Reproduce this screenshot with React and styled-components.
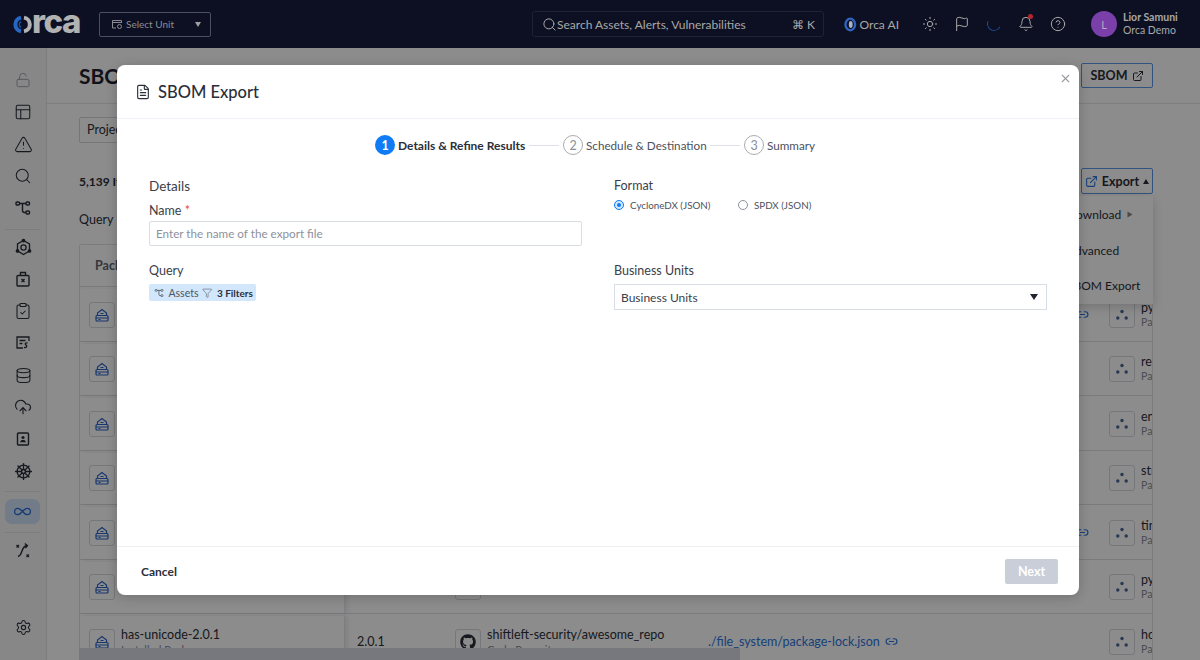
import React from 'react'
import styled, { createGlobalStyle } from 'styled-components'
import {
  LockOpen, PanelsTopLeft, TriangleAlert, Search, ClipboardCheck, Database, CloudUpload,
  ShipWheel, Infinity as InfinityIcon, Settings, Sun, Flag, Bell, CircleHelp, ExternalLink,
  FileText, X, Link2, Funnel,
} from 'lucide-react'
import { FaGithub } from 'react-icons/fa'

const GlobalStyle = createGlobalStyle`
  html, body { margin: 0; padding: 0; background: #fff; }
  body { font-family: "Lato", "Noto Sans", sans-serif; color: #2b2f3a; }
  * { box-sizing: border-box; }
`

const Page = styled.div`
  position: relative;
  width: 1200px;
  height: 660px;
  overflow: hidden;
  display: flex;
  flex-direction: column;
`

/* top bar */
const TopBar = styled.header`
  height: 48px;
  flex: none;
  display: flex;
  align-items: center;
  background: #0d1023;
  color: #a8a8a8;
  font-size: 12px;
`
const Logo = styled.div`
  margin-left: 13px;
  width: 67px;
  display: flex;
  align-items: center;
`
const LogoText = styled.span`
  font-family: "Inter", sans-serif;
  font-weight: 800;
  font-size: 33px;
  line-height: 24px;
  height: 24px;
  letter-spacing: -1.5px;
  color: #b2b2b2;
  margin-top: -6px;
`
const UnitSelect = styled.div`
  margin-left: 19px;
  width: 112px;
  height: 25px;
  border: 1px solid #4b4f63;
  border-radius: 2px;
  display: flex;
  align-items: center;
  gap: 3px;
  padding: 0 9px 0 11px;
  font-size: 10px;
  color: #8b8c93;
  & > span { flex: 1; }
`
const Caret = styled.i`
  width: 0;
  height: 0;
  border-left: 3.5px solid transparent;
  border-right: 3.5px solid transparent;
  border-${({ $up }) => ($up ? 'bottom' : 'top')}: 5px solid ${({ $color }) => $color || '#a0a0a0'};
`
const SearchBox = styled.div`
  margin-left: 321px;
  width: 292px;
  height: 26px;
  border: 1px solid #1e2238;
  border-radius: 3px;
  display: flex;
  align-items: center;
  gap: 0;
  padding: 0 8px 0 9px;
  & > span { flex: 1; }
`
const OrcaAi = styled.div`
  margin-left: 20px;
  width: 55px;
  display: flex;
  align-items: center;
  gap: 3px;
  white-space: nowrap;
`
const IconGroup = styled.div`
  margin-left: 23px;
  display: flex;
  gap: 16px;
  align-items: center;
`
const BellWrap = styled.div`
  position: relative;
  height: 16px;
`
const BellDot = styled.i`
  position: absolute;
  top: -2px;
  right: 1px;
  width: 5px;
  height: 5px;
  border-radius: 50%;
  background: #b3262f;
`
const Spinner = styled.i`
  width: 14px;
  height: 14px;
  margin: 0 1px;
  border-radius: 50%;
  border: 1.5px solid transparent;
  border-bottom-color: #1d4c8c;
  border-left-color: #1d4c8c;
  transform: rotate(-20deg);
`
const Avatar = styled.div`
  margin-left: 25px;
  width: 26px;
  height: 26px;
  border-radius: 50%;
  background: #7a3fa8;
  color: #b9a6c6;
  font-size: 11px;
  display: flex;
  align-items: center;
  justify-content: center;
`
const UserInfo = styled.div`
  margin-left: 6px;
  font-size: 10.5px;
  line-height: 13px;
  white-space: nowrap;
  & > b { display: block; font-weight: 700; }
`

/* page under the dialog */
const Body = styled.div`
  flex: 1;
  min-height: 0;
  display: flex;
`
const Sidebar = styled.nav`
  width: 47px;
  flex: none;
  padding: 16px 0 17px;
  display: flex;
  flex-direction: column;
  background: #f6f6f7;
  border-right: 1px solid #e2e3e6;
  box-shadow: 2px 0 4px rgba(0, 0, 0, 0.06);
  color: #2b2f3a;
`
const NavItem = styled.div`
  height: 32px;
  flex: none;
  display: flex;
  align-items: center;
  justify-content: center;
  margin-top: ${({ $last }) => ($last ? 'auto' : '0')};
  color: ${({ $muted }) => ($muted ? '#9a9da6' : 'inherit')};
`
const ActiveItem = styled.div`
  width: 35px;
  height: 25px;
  margin-left: -1px;
  border-radius: 7px;
  background: #cfe0f7;
  color: #2a6fd6;
  display: flex;
  align-items: center;
  justify-content: center;
`
const NavDivider = styled.hr`
  flex: none;
  width: 35px;
  height: 1px;
  border: 0;
  background: #e1e3e8;
  margin: ${({ $m }) => $m};
  margin-left: 5px;
`
const Main = styled.main`
  flex: 1;
  min-width: 0;
  display: flex;
  flex-direction: column;
  overflow: hidden;
  background: #fff;
`
const PageHeader = styled.div`
  height: 56px;
  flex: none;
  padding: 0 47px 0 32px;
  display: flex;
  align-items: center;
  justify-content: space-between;
  border-bottom: 1px solid #e4e6ea;
`
const PageTitle = styled.h1`
  margin: 0;
  font-size: 21px;
  font-weight: 700;
  color: #1f2330;
`
const OutlineButton = styled.button`
  font-family: inherit;
  height: ${({ $h }) => $h}px;
  width: 72px;
  padding: 0;
  display: flex;
  align-items: center;
  justify-content: center;
  gap: 4px;
  background: #fff;
  border: 1px solid #5b96e8;
  border-radius: 2px;
  font-size: 12.5px;
  font-weight: 700;
  color: #2b2f3a;
`
const Content = styled.div`
  padding: 13px 47px 0 32px;
  display: flex;
  flex-direction: column;
`
const FilterBox = styled.div`
  width: 110px;
  height: 26px;
  border: 1px solid #d5d8df;
  border-radius: 2px;
  padding: 0 7px;
  font-size: 12.5px;
  line-height: 24px;
`
const CountRow = styled.div`
  position: relative;
  margin-top: 25px;
  height: 26px;
  display: flex;
  align-items: center;
  justify-content: space-between;
  font-size: 12px;
  font-weight: 700;
`
const Menu = styled.div`
  position: absolute;
  z-index: 2;
  top: 28px;
  right: 0;
  width: 98px;
  height: 108px;
  padding: 1px 0 0 12px;
  display: flex;
  flex-direction: column;
  background: #fff;
  box-shadow: 0 3px 10px rgba(0, 0, 0, 0.18);
`
const MenuItem = styled.div`
  height: 35.5px;
  display: flex;
  align-items: center;
  gap: 6px;
  font-size: 12px;
  font-weight: 400;
`
const QueryLabel = styled.div`
  margin-top: 18px;
  font-size: 12.5px;
  line-height: 16px;
`
const Table = styled.div`
  margin-top: 16px;
  border: 1px solid #dfe1e6;
  border-bottom: 0;
  border-radius: 2px 2px 0 0;
`
const HeadRow = styled.div`
  height: 42px;
  padding-left: 15px;
  display: flex;
  align-items: center;
  font-size: 12.5px;
  font-weight: 700;
  color: #5f6470;
  border-bottom: 1px solid #dfe1e6;
`
const Row = styled.div`
  height: 54.5px;
  padding-top: 2px;
  display: grid;
  grid-template-columns: 265px 101px 254px 399px 53px;
  border-bottom: 1px solid #dfe1e6;
`
const Cell = styled.div`
  display: flex;
  align-items: center;
  gap: 6px;
  min-width: 0;
  overflow: hidden;
  padding: ${({ $pad }) => $pad || '0 9px'};
  justify-content: ${({ $end }) => ($end ? 'flex-end' : 'flex-start')};
  font-size: 12.5px;
  color: #2b2f3a;
  ${({ $sticky }) => $sticky && 'box-shadow: 3px 0 4px rgba(0, 0, 0, 0.08); border-right: 1px solid #e5e6ea;'}
`
const IconBox = styled.div`
  width: 26px;
  height: 26px;
  flex: none;
  border: 1px solid #d6d9e1;
  border-radius: 3px;
  display: flex;
  align-items: center;
  justify-content: center;
  color: ${({ $color }) => $color};
`
const CellText = styled.div`
  display: flex;
  flex-direction: column;
  white-space: nowrap;
  line-height: 15px;
`
const SubText = styled.span`
  font-size: ${({ $small }) => ($small ? 10.5 : 11)}px;
  color: #8a8e99;
`
const FileLink = styled.span`
  display: flex;
  align-items: center;
  gap: 5px;
  color: #2a75e0;
  white-space: nowrap;
`
const ScrollThumb = styled.div`
  position: absolute;
  left: 79px;
  bottom: 0;
  width: 661px;
  height: 12px;
  background: #d9dbe6;
  z-index: 1;
`

/* dialog */
const Overlay = styled.div`
  position: absolute;
  z-index: 3;
  inset: 48px 0 0 0;
  padding: 17px 121px 65px 117px;
  background: rgba(0, 0, 0, 0.45);
  display: flex;
`
const Modal = styled.section`
  position: relative;
  flex: 1;
  display: flex;
  flex-direction: column;
  background: #fff;
  border-radius: 8px;
  box-shadow: 0 2px 12px rgba(0, 0, 0, 0.2);
`
const ModalHeader = styled.div`
  height: 54px;
  flex: none;
  padding-left: 18px;
  display: flex;
  align-items: center;
  gap: 7px;
  border-bottom: 1.5px solid #f0f1f6;
  color: #2b2f3a;
`
const ModalTitle = styled.h2`
  margin: 0;
  font-size: 16.5px;
  font-weight: 500;
`
const CloseButton = styled.div`
  position: absolute;
  top: 7px;
  right: 7px;
  color: #9a9ca3;
  display: flex;
`
const Stepper = styled.div`
  margin-top: 16px;
  height: 20px;
  padding-left: 258px;
  display: flex;
  align-items: center;
`
const StepNumber = styled.span`
  width: 20px;
  height: 20px;
  flex: none;
  border-radius: 50%;
  display: flex;
  align-items: center;
  justify-content: center;
  font-size: 12.5px;
  font-weight: ${({ $active }) => ($active ? 700 : 400)};
  color: ${({ $active }) => ($active ? '#fff' : '#8a8e99')};
  background: ${({ $active }) => ($active ? '#0f7cf5' : '#fff')};
  border: ${({ $active }) => ($active ? '0' : '1px solid #a9acb4')};
`
const StepLabel = styled.span`
  margin-left: 3px;
  width: ${({ $w }) => $w}px;
  font-size: ${({ $active }) => ($active ? 12 : 11.7)}px;
  white-space: nowrap;
  font-weight: ${({ $active }) => ($active ? 700 : 400)};
  color: ${({ $active }) => ($active ? '#2b2f3a' : '#4d515c')};
`
const StepLine = styled.i`
  width: 30px;
  height: 1px;
  margin: 0 4px 0 4px;
  background: #dfe1ea;
`
const FormGrid = styled.div`
  flex: 1;
  padding: 22px 32px 0;
  display: grid;
  grid-template-columns: 433px 433px;
  column-gap: 32px;
  align-content: start;
`
const FormColumn = styled.div`
  display: flex;
  flex-direction: column;
  padding-top: ${({ $top }) => $top || 0}px;
`
const SectionTitle = styled.div`
  font-size: 13.5px;
  line-height: 18px;
  color: #3a3e49;
`
const Label = styled.label`
  display: block;
  margin-top: ${({ $top }) => $top}px;
  font-size: 12.5px;
  line-height: 14px;
  color: #3a3e49;
  & > em { color: #e5484d; font-style: normal; }
`
const TextInput = styled.div`
  margin-top: 3px;
  height: 25px;
  border: 1px solid #d9dde6;
  border-radius: 2px;
  padding: 0 6px;
  font-size: 11.7px;
  line-height: 23px;
  color: #8d919c;
`
const QueryChip = styled.div`
  margin-top: 6px;
  width: 107px;
  height: 17px;
  padding: 0 3px 0 5px;
  display: flex;
  align-items: center;
  gap: 4px;
  background: #d3e7fc;
  border-radius: 2px;
  font-size: 10.5px;
  color: #4d5560;
  white-space: nowrap;
  & > b { color: #2b2f3a; font-weight: 700; font-size: 10px; }
`
const RadioRow = styled.div`
  margin-top: 5px;
  height: 14px;
  display: flex;
  align-items: center;
`
const Radio = styled.i`
  width: 10px;
  height: 10px;
  flex: none;
  border-radius: 50%;
  border: ${({ $on }) => ($on ? '3px solid #d3e7fc' : '1px solid #8d919c')};
  background: ${({ $on }) => ($on ? '#0f7cf5' : '#fff')};
  outline: ${({ $on }) => ($on ? '1px solid #0f7cf5' : 'none')};
  outline-offset: -1px;
`
const RadioLabel = styled.span`
  margin-left: ${({ $gap }) => $gap}px;
  width: ${({ $w }) => $w}px;
  font-size: 9.8px;
  color: #4d515c;
  white-space: nowrap;
`
const SelectBox = styled.div`
  margin-top: 6px;
  height: 26px;
  border: 1px solid #d9dde6;
  padding: 0 8px 0 6px;
  display: flex;
  align-items: center;
  justify-content: space-between;
  font-size: 12px;
  color: #3a3e49;
`
const ModalFooter = styled.div`
  height: 49px;
  flex: none;
  padding: 0 21px 0 24px;
  display: flex;
  align-items: center;
  justify-content: space-between;
  border-top: 1.5px solid #eff0f3;
`
const CancelButton = styled.button`
  border: 0;
  padding: 0;
  background: none;
  font-family: inherit;
  font-size: 12px;
  font-weight: 700;
  color: #2b2f3a;
`
const NextButton = styled.button`
  width: 53px;
  height: 25px;
  border: 0;
  border-radius: 2px;
  background: #c9ced9;
  color: #fff;
  font-family: inherit;
  font-size: 12.5px;
  font-weight: 700;
`

/* drawn icons */
const OrcaRing = () => (
  <svg width="19" height="19" viewBox="0 0 19 19" fill="none" strokeWidth="4">
    <path d="M8 2.6A7 7 0 0 0 2.4 9.5 7 7 0 0 0 8 16.4" stroke="#2468c4" />
    <path d="M11 2.6a7 7 0 0 1 0 13.8" stroke="#b2b2b2" />
    <path d="M8 6.5a3.5 3.5 0 0 0 0 6" stroke="#1c4f96" strokeWidth="1.5" />
  </svg>
)
const AiMark = () => (
  <svg width="13" height="15" viewBox="0 0 13 15" fill="none">
    <ellipse cx="6.5" cy="7.5" rx="5" ry="6" stroke="#2f65c0" strokeWidth="2.4" />
    <ellipse cx="7" cy="7.5" rx="2" ry="3.6" fill="#a7b4c9" />
  </svg>
)
const UnitIcon = () => (
  <svg width="12" height="12" viewBox="0 0 12 12" fill="none" stroke="currentColor">
    <path d="M5 10H1.5V2.5h9V5" />
    <path d="M1.5 4.5h9" />
    <circle cx="8.5" cy="8.5" r="2" />
  </svg>
)
const FlowIcon = ({ size = 18 }) => (
  <svg width={size} height={size} viewBox="0 0 18 18" fill="none" stroke="currentColor" strokeWidth="1.4">
    <rect x="2" y="3" width="3.5" height="3" rx="1" />
    <rect x="12" y="3" width="3.5" height="3" rx="1" />
    <rect x="12" y="12" width="3.5" height="3" rx="1" />
    <path d="M5.5 4.5H12M8.5 4.5v7a2 2 0 0 0 2 2H12" />
  </svg>
)
const HexNetIcon = () => (
  <svg width="19" height="19" viewBox="0 0 19 19" fill="none" stroke="currentColor" strokeWidth="1.3">
    <path d="M9.5 2.5l6 3.4v7l-6 3.6-6-3.6v-7z" />
    <circle cx="9.5" cy="9.5" r="2.6" />
    <circle cx="9.5" cy="2.6" r="1.2" fill="currentColor" />
    <circle cx="3.5" cy="12.9" r="1.2" fill="currentColor" />
    <circle cx="15.5" cy="12.9" r="1.2" fill="currentColor" />
  </svg>
)
const CaseIcon = () => (
  <svg width="18" height="18" viewBox="0 0 18 18" fill="none" stroke="currentColor" strokeWidth="1.4">
    <rect x="3" y="5.5" width="12" height="10.5" rx="1" />
    <path d="M6.5 5.5V2.5h5v3M7.5 9l3 3M10.5 9l-3 3" />
  </svg>
)
const ScriptIcon = () => (
  <svg width="18" height="18" viewBox="0 0 18 18" fill="none" stroke="currentColor" strokeWidth="1.3">
    <path d="M9 14H3V3h12v4" />
    <path d="M5.5 6.5h6M5.5 9.5h3M13.5 9c-2-.5-3 1-1.5 2s.5 3-2 2.5" />
  </svg>
)
const ContactIcon = () => (
  <svg width="16" height="16" viewBox="0 0 16 16" fill="none" stroke="currentColor" strokeWidth="1.4">
    <rect x="2.5" y="2" width="11" height="12" rx="1" />
    <circle cx="8" cy="6.5" r="1.6" fill="currentColor" stroke="none" />
    <path d="M5 11.2c.4-1.6 1.5-2.2 3-2.2s2.6.6 3 2.2z" fill="currentColor" stroke="none" />
  </svg>
)
const RouteIcon = () => (
  <svg width="18" height="18" viewBox="0 0 18 18" fill="none" stroke="currentColor" strokeWidth="1.4">
    <path d="M4 14.5c2.5-.5 3-2.5 4-5.5s2-5 5-5.5" />
    <path d="M10.8 1.5l2.6 2-2 2.5" />
    <path d="M2.5 3l2.5 2.5M5 3L2.5 5.5M12.5 12.5l2.5 2.5M15 12.5L12.5 15" strokeWidth="1.2" />
  </svg>
)
const PackageIcon = () => (
  <svg width="16" height="16" viewBox="0 0 16 16" fill="none" stroke="currentColor" strokeWidth="1.2">
    <rect x="2" y="8.5" width="12" height="5.5" rx="1" />
    <path d="M3.5 8.5V6L8 2.5 12.5 6v2.5M2 11h12M6.5 6.5h3M4.5 12.5h2" />
  </svg>
)
const DotsIcon = () => (
  <svg width="14" height="14" viewBox="0 0 14 14" fill="currentColor">
    <circle cx="7" cy="3.5" r="1.7" />
    <circle cx="2.8" cy="10" r="1.7" />
    <circle cx="11.2" cy="10" r="1.7" />
  </svg>
)

const navTop = [
  { icon: <LockOpen size={16} strokeWidth={1.4} />, muted: true },
  { icon: <PanelsTopLeft size={18} strokeWidth={1.4} /> },
  { icon: <TriangleAlert size={19} strokeWidth={1.3} /> },
  { icon: <Search size={18} strokeWidth={1.4} /> },
  { icon: <FlowIcon /> },
]
const navMiddle = [
  <HexNetIcon />,
  <CaseIcon />,
  <ClipboardCheck size={18} strokeWidth={1.4} />,
  <ScriptIcon />,
  <Database size={17} strokeWidth={1.5} />,
  <CloudUpload size={18} strokeWidth={1.5} />,
  <ContactIcon />,
  <ShipWheel size={19} strokeWidth={1.7} />,
]

const rows = [
  { right: 'py', link: true },
  { right: 're' },
  { right: 'en' },
  { right: 'str' },
  { right: 'tin', link: true },
  { right: 'py', sub: 'Installed Package', repo: 'Code Repository' },
  {
    right: 'ho',
    name: 'has-unicode-2.0.1',
    sub: 'Installed Package',
    version: '2.0.1',
    repoName: 'shiftleft-security/awesome_repo',
    repo: 'Code Repository',
    file: './file_system/package-lock.json',
  },
]

const App = () => {
  return (
    <Page>
      <GlobalStyle />
      <TopBar>
        <Logo>
          <OrcaRing />
          <LogoText>rca</LogoText>
        </Logo>
        <UnitSelect>
          <UnitIcon />
          <span>Select Unit</span>
          <Caret />
        </UnitSelect>
        <SearchBox>
          <Search size={15} strokeWidth={1.6} />
          <span>Search Assets, Alerts, Vulnerabilities</span>
          ⌘ K
        </SearchBox>
        <OrcaAi>
          <AiMark />
          Orca AI
        </OrcaAi>
        <IconGroup>
          <Sun size={16} strokeWidth={1.5} />
          <Flag size={16} strokeWidth={1.5} />
          <Spinner />
          <BellWrap>
            <Bell size={16} strokeWidth={1.5} />
            <BellDot />
          </BellWrap>
          <CircleHelp size={16} strokeWidth={1.5} />
        </IconGroup>
        <Avatar>L</Avatar>
        <UserInfo>
          <b>Lior Samuni</b>
          Orca Demo
        </UserInfo>
      </TopBar>

      <Body>
        <Sidebar>
          {navTop.map((item, i) => (
            <NavItem key={i} $muted={item.muted}>{item.icon}</NavItem>
          ))}
          <NavDivider $m="5px 0 1px" />
          {navMiddle.map((icon, i) => (
            <NavItem key={i}>{icon}</NavItem>
          ))}
          <NavDivider $m="4px 0 3px" />
          <NavItem>
            <ActiveItem><InfinityIcon size={19} strokeWidth={1.6} /></ActiveItem>
          </NavItem>
          <NavDivider $m="5px 0 2px" />
          <NavItem><RouteIcon /></NavItem>
          <NavItem $last><Settings size={17} strokeWidth={1.5} /></NavItem>
        </Sidebar>

        <Main>
          <PageHeader>
            <PageTitle>SBOM</PageTitle>
            <OutlineButton $h={25}>SBOM <ExternalLink size={12} /></OutlineButton>
          </PageHeader>
          <Content>
            <FilterBox>Project</FilterBox>
            <CountRow>
              5,139 Items
              <OutlineButton $h={26}>
                <ExternalLink size={13} color="#2a75e0" />
                Export
                <Caret $up $color="#2b2f3a" />
              </OutlineButton>
              <Menu>
                <MenuItem>Download <Caret $color="#888" style={{ transform: 'rotate(-90deg)' }} /></MenuItem>
                <MenuItem>Advanced</MenuItem>
                <MenuItem>SBOM Export</MenuItem>
              </Menu>
            </CountRow>
            <QueryLabel>Query</QueryLabel>
            <Table>
              <HeadRow>Package</HeadRow>
              {rows.map((row, i) => (
                <Row key={i}>
                  <Cell $sticky>
                    <IconBox $color="#2a64c8"><PackageIcon /></IconBox>
                    <CellText>
                      {row.name && <span>{row.name}</span>}
                      {row.sub && <SubText>{row.sub}</SubText>}
                    </CellText>
                  </Cell>
                  <Cell $pad="0 12px">{row.version}</Cell>
                  <Cell>
                    {row.repo && (
                      <IconBox $color="#2b2f3a"><FaGithub size={16} /></IconBox>
                    )}
                    <CellText>
                      {row.repoName && <span>{row.repoName}</span>}
                      {row.repo && <SubText>{row.repo}</SubText>}
                    </CellText>
                  </Cell>
                  <Cell $pad="0 10px 0 8px" $end={!row.file}>
                    {row.file && <FileLink>{row.file} <Link2 size={13} /></FileLink>}
                    {row.link && <FileLink><Link2 size={13} /></FileLink>}
                  </Cell>
                  <Cell $pad="0 0 0 10px">
                    <IconBox $color="#4a6796"><DotsIcon /></IconBox>
                    <CellText>
                      <span>{row.right}</span>
                      <SubText $small>Pa</SubText>
                    </CellText>
                  </Cell>
                </Row>
              ))}
            </Table>
          </Content>
        </Main>
      </Body>
      <ScrollThumb />

      <Overlay>
        <Modal>
          <ModalHeader>
            <FileText size={16} strokeWidth={1.7} />
            <ModalTitle>SBOM Export</ModalTitle>
          </ModalHeader>
          <CloseButton><X size={13} /></CloseButton>
          <Stepper>
            <StepNumber $active>1</StepNumber>
            <StepLabel $active $w={127}>Details &amp; Refine Results</StepLabel>
            <StepLine />
            <StepNumber>2</StepNumber>
            <StepLabel $w={120}>Schedule &amp; Destination</StepLabel>
            <StepLine />
            <StepNumber>3</StepNumber>
            <StepLabel $w={50}>Summary</StepLabel>
          </Stepper>
          <FormGrid>
            <FormColumn>
              <SectionTitle>Details</SectionTitle>
              <Label $top={9}>Name <em>*</em></Label>
              <TextInput>Enter the name of the export file</TextInput>
              <Label $top={18}>Query</Label>
              <QueryChip>
                <FlowIcon size={12} />
                Assets
                <Funnel size={12} strokeWidth={1.3} />
                <b>3 Filters</b>
              </QueryChip>
            </FormColumn>
            <FormColumn $top={2}>
              <Label $top={0}>Format</Label>
              <RadioRow>
                <Radio $on />
                <RadioLabel $gap={6} $w={108}>CycloneDX (JSON)</RadioLabel>
                <Radio />
                <RadioLabel $gap={6}>SPDX (JSON)</RadioLabel>
              </RadioRow>
              <Label $top={52}>Business Units</Label>
              <SelectBox>
                Business Units
                <Caret $color="#1f2330" style={{ borderLeftWidth: 4, borderRightWidth: 4, borderTopWidth: 6 }} />
              </SelectBox>
            </FormColumn>
          </FormGrid>
          <ModalFooter>
            <CancelButton>Cancel</CancelButton>
            <NextButton>Next</NextButton>
          </ModalFooter>
        </Modal>
      </Overlay>
    </Page>
  )
}

export default App
